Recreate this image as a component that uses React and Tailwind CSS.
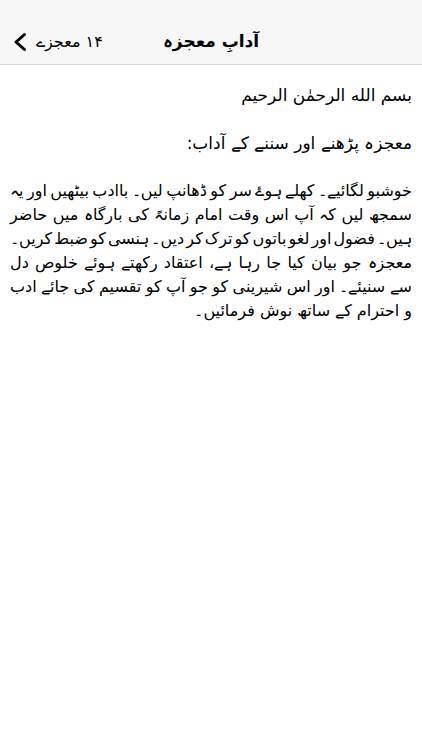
import React from 'react';

const urdu = { fontFamily: '"DejaVu Sans", "Noto Sans", sans-serif' };

const paragraph = [
  { text: 'خوشبو لگائیے۔ کھلے ہوۓ سر کو ڈھانپ لیں۔ باادب بیٹھیں اور یہ', tight: true },
  { text: 'سمجھ لیں کہ آپ اس وقت امام زمانہً کی بارگاہ میں حاضر' },
  { text: 'ہیں۔ فضول اور لغو باتوں کو ترک کر دیں۔ ہنسی کو ضبط کریں۔', tight: true },
  { text: 'معجزہ جو بیان کیا جا رہا ہے، اعتقاد رکھتے ہوئے خلوص دل' },
  { text: 'سے سنیئے۔ اور اس شیرینی کو جو آپ کو تقسیم کی جائے ادب' },
];

const NavBar = () => (
  <div className="bg-[#f7f7f7] border-b border-[#d6d6d6]">
    <div className="h-5" />
    <div className="relative h-11 flex items-center">
      <button className="flex items-center gap-2 pl-[12px] text-black">
        <svg width="16" height="20" viewBox="0 0 16 20">
          <polyline points="12.5,2.5 4,10 12.5,17.5" fill="none" stroke="#000" strokeWidth="3" strokeLinecap="round" strokeLinejoin="round" />
        </svg>
        <span dir="rtl" className="text-[16px]" style={urdu}>۱۴ معجزے</span>
      </button>
      <div dir="rtl" className="absolute left-0 right-0 text-center text-[17px] font-bold pointer-events-none" style={urdu}>
        آدابِ معجزہ
      </div>
    </div>
  </div>
);

export default function App() {
  return (
    <div className="w-[422px] min-h-[750px] bg-white">
      <NavBar />
      <div dir="rtl" className="px-[10px] pt-[18px] text-[17px] leading-[24px] text-black" style={urdu}>
        <p>بسم الله الرحمٰن الرحيم</p>
        <p className="h-6" />
        <p>معجزہ پڑھنے اور سننے کے آداب:</p>
        <p className="h-6" />
        <div className="text-[16px]">
          {paragraph.map((line, i) => (
            <p
              key={i}
              className={
                line.tight
                  ? 'whitespace-nowrap text-justify [text-align-last:justify] [word-spacing:-3.5px]'
                  : 'whitespace-nowrap text-justify [text-align-last:justify] [word-spacing:-2px]'
              }
            >
              {line.text}
            </p>
          ))}
          <p className="whitespace-nowrap">و احترام کے ساتھ نوش فرمائیں۔</p>
        </div>
      </div>
    </div>
  );
}
